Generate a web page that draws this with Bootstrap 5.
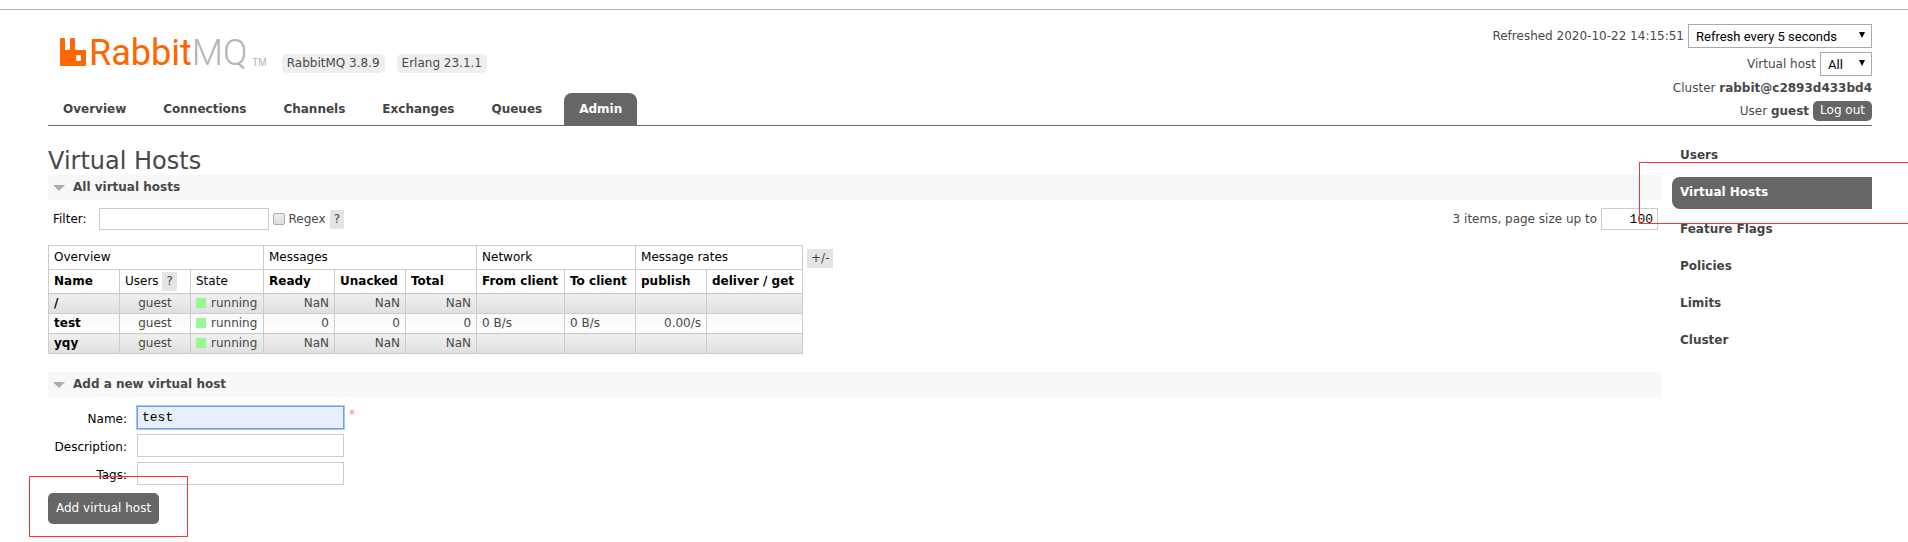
<!DOCTYPE html>
<html lang="en">
<head>
<meta charset="utf-8">
<meta name="viewport" content="width=device-width, initial-scale=1">
<title>RabbitMQ Management</title>
<link href="https://cdn.jsdelivr.net/npm/bootstrap@5.3.0/dist/css/bootstrap.min.css" rel="stylesheet">
<style>
  body { font: 12px/17px Verdana, "DejaVu Sans", sans-serif; color: #484848; background: #fff; overflow-x: hidden; min-height: 100vh; }
  .top-rule { height: 9px; border-bottom: 1px solid #b4b4b4; box-sizing: content-box; }
  .page-wrap { padding: 0 36px 20px 48px; }

  /* header */
  .site-header { border-bottom: 1px solid #666; }
  .logo { color: #f60; text-decoration: none; font: 36px/51px Roboto, "Liberation Sans", sans-serif; margin: 18px 0 0 12px; height: 40px; }
  .logo:hover { color: #f60; }
  .logo svg { margin-top: 10px; margin-right: 2px; }
  .logo .logo-mq { color: #b4b4b4; font-weight: 300; }
  .logo .logo-tm { color: #b4b4b4; font: 10px/12px "Liberation Sans", sans-serif; margin: 29px 0 0 5px; }
  .versions { padding: 44px 0 0 15px; gap: 12px; }
  .version-tag { background: #eee; border-radius: 5px; padding: 1px 5px; }
  .main-tabs .nav-link { color: #444; font-weight: bold; padding: 8px 15px 7px; line-height: 17px; border-radius: 8px 8px 0 0; }
  .main-tabs { gap: 7px; }
  .main-tabs .nav-link.active, .side-menu .nav-link.active { background: #666; color: #fff; }
  .status-row select { font: 13px/17px Roboto, "Liberation Sans", sans-serif; color: #000; background: #fff; border: 1px solid #aaa; border-radius: 0; appearance: none; padding: 3px 28px 3px 7px; height: 24px; display: block; }
  .status-row .refresh-select { width: 184px; }
  .pick { position: relative; }
  .pick::after { content: ""; position: absolute; right: 7px; top: 8px; border: 3px solid transparent; border-top: 6px solid #000; border-bottom: 0; pointer-events: none; }
  .status-col { padding-top: 14px; }
  .btn-dark-grey { background: #666; color: #fff; border: 0; border-radius: 5px; font: inherit; line-height: 17px; }
  .btn-dark-grey:hover { background: #444; color: #fff; }
  .btn-logout { padding: 1px 7px 2px; }
  .btn-add { padding: 7px 8px; }

  /* content */
  h1 { font-size: 24px; line-height: 28px; font-weight: normal; margin: 21px 0 0; }
  h2 { font-size: 12px; line-height: 17px; font-weight: bold; background: #f8f8f8; padding: 4px 5px; margin: 0; }
  h2::before { content: ""; border: 6px solid transparent; border-top-color: #aaa; border-bottom: 0; margin-right: 8px; }
  .section-gap { margin-top: 18px; }
  .field { border: 1px solid #ccc; background: #fff; color: #000; font: 13px/17px "Liberation Mono", monospace; padding: 2px 4px; height: 22px; border-radius: 0; }
  .field-filter { width: 170px; margin: 0 4px 0 12px; }
  .field-page { width: 57px; text-align: right; }
  .field-form { width: 207px; height: 23px; }
  .field-form.focused { background: #e8f0fe; border-color: #6f9fe8; outline: 1px solid #a5c5fa; }
  .ink { color: #000; }
  .hint { background: #e4e4e4; color: #444; border: 0; padding: 1px 4px; font: inherit; line-height: 17px; border-radius: 0; }
  .filter-row { padding: 8px 4px 0 5px; margin-bottom: 15px; }
  .tick { appearance: none; width: 12px; height: 12px; margin: 0; border: 1px solid #aaa; border-radius: 2px; background: linear-gradient(#eee, #ddd); }
  .vhosts { table-layout: fixed; border-collapse: collapse; width: 755px; }
  .vhosts th, .vhosts td { border: 1px solid #ccc; padding: 1px 5px; white-space: nowrap; line-height: 17px; height: 20px; text-align: left; vertical-align: middle; }
  .vhosts thead th { color: #000; height: 24px; }
  .vhosts thead .plain { font-weight: normal; }
  .vhosts tbody tr:nth-child(odd) td, .vhosts tbody tr:nth-child(odd) th { background: linear-gradient(#f0f0f0, #dfdfdf); }
  .vhosts tbody tr:nth-child(even) td, .vhosts tbody tr:nth-child(even) th { background: linear-gradient(#f8f8f8, #fff); }
  .vhosts tbody th { color: #000; }
  .vhosts td.num { text-align: right; }
  .vhosts td.mid { text-align: center; }
  .state-box { display: inline-block; width: 10px; height: 10px; background: #98f898; margin-right: 5px; vertical-align: -1px; }
  .form-grid { display: grid; grid-template-columns: 79px auto; column-gap: 10px; row-gap: 5px; padding-top: 9px; justify-content: start; }
  .form-grid label { text-align: right; padding-top: 5px; color: #000; }
  .required { color: #f88; padding-left: 5px; }

  /* side menu */
  .side-menu { flex: 0 0 200px; margin: 14px 0 0 10px; gap: 5px; }
  .side-menu .nav-link { color: #444; font-weight: bold; padding: 7px 8px 8px; border-radius: 8px 0 0 8px; }

  /* red call-out frames over the page */
  .callout-host { position: relative; }
  .callout-host::after { content: ""; position: absolute; border: 1px solid #f33; pointer-events: none; }
  .callout-side::after { inset: -15px -36px -15px -33px; border-right: 0; }
  .callout-add::after { inset: -17px -29px -13px -19px; }
</style>
</head>
<body>
<div class="top-rule"></div>
<div class="page-wrap">
  <header class="site-header d-flex justify-content-between">
    <div class="d-flex flex-column justify-content-between">
      <div class="d-flex align-items-start">
        <a class="logo d-flex" href="#" aria-label="RabbitMQ">
          <svg width="27" height="28" viewBox="0 0 27 28" fill="#f60" aria-hidden="true"><path fill-rule="evenodd" d="M1 0H4Q5 0 5 1V11Q5 12 6 12H9Q10 12 10 11V1Q10 0 11 0H14Q15 0 15 1V11Q15 12 16 12H25Q26 12 26 13V27Q26 28 25 28H1Q0 28 0 27V1Q0 0 1 0ZM17 17Q16 17 16 18V22Q16 23 17 23H20Q21 23 21 22V18Q21 17 20 17Z"/></svg>
          <span>Rabbit</span><span class="logo-mq">MQ</span><span class="logo-tm">TM</span>
        </a>
        <div class="versions d-flex">
          <span class="version-tag">RabbitMQ 3.8.9</span>
          <span class="version-tag">Erlang 23.1.1</span>
        </div>
      </div>
      <nav class="nav main-tabs">
        <a class="nav-link" href="#">Overview</a>
        <a class="nav-link" href="#">Connections</a>
        <a class="nav-link" href="#">Channels</a>
        <a class="nav-link" href="#">Exchanges</a>
        <a class="nav-link" href="#">Queues</a>
        <a class="nav-link active" aria-current="page" href="#">Admin</a>
      </nav>
    </div>
    <div class="status-col d-flex flex-column align-items-end">
      <div class="status-row d-flex align-items-center gap-1 mb-1">
        <label for="refresh">Refreshed 2020-10-22 14:15:51</label>
        <span class="pick"><select class="refresh-select" id="refresh"><option>Refresh every 5 seconds</option></select></span>
      </div>
      <div class="status-row d-flex align-items-center gap-1 mb-1">
        <label for="vhost">Virtual host</label>
        <span class="pick"><select id="vhost"><option>All</option></select></span>
      </div>
      <div class="mb-1">Cluster <b>rabbit@c2893d433bd4</b></div>
      <div class="d-flex align-items-center gap-1 pb-1"><span>User <b>guest</b></span><button class="btn btn-dark-grey btn-logout" type="button">Log out</button></div>
    </div>
  </header>

  <div class="d-flex align-items-start">
    <main class="flex-grow-1">
      <h1>Virtual Hosts</h1>
      <h2 class="d-flex align-items-center">All virtual hosts</h2>
      <div class="filter-row d-flex justify-content-between">
        <div class="d-flex align-items-center">
          <label class="ink" for="filter">Filter:</label>
          <input class="field field-filter" id="filter" type="text">
          <input class="tick" id="regex" type="checkbox"><label class="ms-1 me-1" for="regex">Regex</label>
          <button class="hint" type="button">?</button>
        </div>
        <div class="d-flex align-items-center gap-1">
          <label for="pagesize">3 items, page size up to</label>
          <input class="field field-page" id="pagesize" type="text" value="100">
        </div>
      </div>
      <div class="d-flex align-items-start">
        <table class="vhosts">
          <colgroup><col width="71"><col width="71"><col width="73"><col width="71"><col width="71"><col width="71"><col width="88"><col width="71"><col width="71"><col width="96"></colgroup>
          <thead>
            <tr><th class="plain" colspan="3">Overview</th><th class="plain" colspan="3">Messages</th><th class="plain" colspan="2">Network</th><th class="plain" colspan="2">Message rates</th></tr>
            <tr><th>Name</th><th class="plain">Users <button class="hint" type="button">?</button></th><th class="plain">State</th><th>Ready</th><th>Unacked</th><th>Total</th><th>From client</th><th>To client</th><th>publish</th><th>deliver / get</th></tr>
          </thead>
          <tbody>
            <tr><th>/</th><td class="mid">guest</td><td><span class="state-box"></span>running</td><td class="num">NaN</td><td class="num">NaN</td><td class="num">NaN</td><td></td><td></td><td></td><td></td></tr>
            <tr><th>test</th><td class="mid">guest</td><td><span class="state-box"></span>running</td><td class="num">0</td><td class="num">0</td><td class="num">0</td><td>0 B/s</td><td>0 B/s</td><td class="num">0.00/s</td><td></td></tr>
            <tr><th>yqy</th><td class="mid">guest</td><td><span class="state-box"></span>running</td><td class="num">NaN</td><td class="num">NaN</td><td class="num">NaN</td><td></td><td></td><td></td><td></td></tr>
          </tbody>
        </table>
        <button class="hint mt-1 ms-1" type="button">+/-</button>
      </div>

      <h2 class="section-gap d-flex align-items-center">Add a new virtual host</h2>
      <form>
        <div class="form-grid">
          <label for="name">Name:</label>
          <div class="d-flex"><input class="field field-form focused" id="name" type="text" value="test"><span class="required">*</span></div>
          <label for="description">Description:</label>
          <input class="field field-form" id="description" type="text">
          <label for="tags">Tags:</label>
          <input class="field field-form" id="tags" type="text">
        </div>
        <div class="callout-host callout-add d-inline-block mt-2"><button class="btn btn-dark-grey btn-add d-block" type="button">Add virtual host</button></div>
      </form>
    </main>

    <nav class="nav side-menu flex-column">
      <a class="nav-link" href="#">Users</a>
      <div class="callout-host callout-side"><a class="nav-link active" aria-current="page" href="#">Virtual Hosts</a></div>
      <a class="nav-link" href="#">Feature Flags</a>
      <a class="nav-link" href="#">Policies</a>
      <a class="nav-link" href="#">Limits</a>
      <a class="nav-link" href="#">Cluster</a>
    </nav>
  </div>
</div>
<script src="https://cdn.jsdelivr.net/npm/bootstrap@5.3.0/dist/js/bootstrap.bundle.min.js"></script>
</body>
</html>
